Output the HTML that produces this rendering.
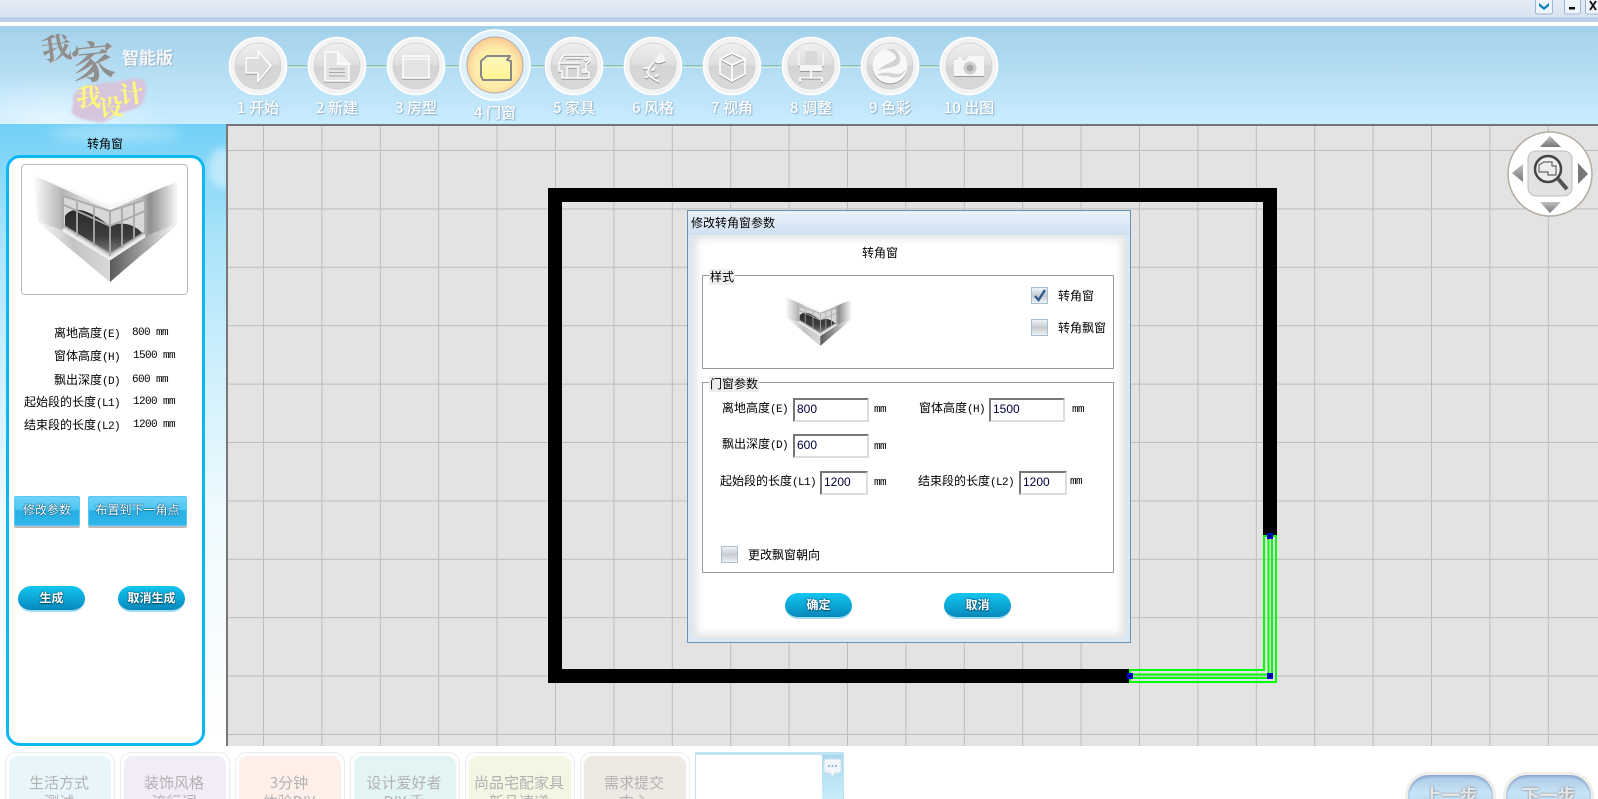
<!DOCTYPE html>
<html lang="zh"><head><meta charset="utf-8"><title>我家我设计</title>
<style>
html,body{margin:0;padding:0;width:1598px;height:799px;overflow:hidden;background:#fff}
body{position:relative;font-family:"WenQuanYi Zen Hei","Noto Sans CJK SC",sans-serif;font-size:12px;color:#000}
div,span,svg{position:absolute}
svg{display:block;overflow:visible}
b.m{position:static;font:normal 11px "Liberation Mono",monospace;letter-spacing:-.6px}
.t{white-space:nowrap;line-height:16px;height:16px}
.v{font:11px/16px "Liberation Mono",monospace;letter-spacing:-.6px;white-space:nowrap;height:16px}
.step{width:80px;text-align:center;color:#fff;font:500 15px/18px "Noto Sans CJK SC",sans-serif;text-shadow:1px 1px 1px #8fb4cd,0 0 2px #a9c6da;white-space:nowrap}
.inp{box-sizing:border-box;background:#fff;border:2px solid;border-color:#777 #ddd #ddd #777;height:24px;font:12px/18px "Liberation Sans",sans-serif;padding-left:2px;color:#00003a}
.cb{width:15px;height:15px;border:1px solid #a9bfd0;background:linear-gradient(#eef3f7,#c5cbd0 50%,#eef2f5)}
.pill{box-sizing:border-box;width:67px;height:26px;border-radius:13px;background:linear-gradient(#13c6f0,#0a9ccd 70%,#0a86b8);border-bottom:2px solid #9fdcf2;color:#fff;text-align:center;font:700 12px/23px "Noto Sans CJK SC",sans-serif;text-shadow:0 0 2px #04506e,0 1px 1px #04506e,0 0 1px #04506e}
.sq{box-sizing:border-box;height:30px;border-radius:2px;background:linear-gradient(#6fd3f8,#4cc6f2 45%,#27b0e6 50%,#2fb5ea);border:1px solid #58c8f2;box-shadow:0 2px 0 #bbb;color:#fff;text-align:center;font:12px/27px "WenQuanYi Zen Hei",sans-serif;text-shadow:0 0 2px #045b80,0 0 1px #045b80,0 0 1px #045b80}
.fs{box-sizing:border-box;border:1px solid #999;left:702px;width:412px}
.lg{background:#eee;height:16px;line-height:16px;padding:0 1px;white-space:nowrap}
.tab{box-sizing:border-box;top:752px;height:60px;border:1px solid #ececec;border-radius:11px;width:110px}
.tab div{left:3px;right:3px;top:3px;bottom:0;border-radius:9px;background:#fff}
.tab p{margin:0;position:absolute;left:3px;right:5px;top:3px;text-align:center;color:#b2b2b2;font:15px/19px "Noto Sans CJK SC",sans-serif;padding-top:17px;white-space:nowrap}
.nav{top:772px;width:91px;height:50px;box-sizing:border-box;border:3px solid #f1ede8;border-radius:24px;background:linear-gradient(#a9c8e4,#c8e4f8 40%,#a5cbe8);box-shadow:inset 0 2px 2px #8aa5cf;color:#e6e6e6;text-align:center;font:700 18px/40px "Noto Sans CJK SC",sans-serif;text-shadow:0 0 2px #777}
</style></head><body>

<!-- top bar -->
<div style="left:0;top:0;width:1598px;height:18px;background:linear-gradient(#e3ebf5,#d8e3f1)"></div>
<div style="left:0;top:17px;width:1598px;height:5px;background:#bdd0e8"></div>
<!-- header -->
<div style="left:0;top:26px;width:1598px;height:98px;background:linear-gradient(#a3d1ea,#c9ecff)"></div>
<div style="left:0;top:76px;width:170px;height:48px;background:radial-gradient(ellipse at 30% 90%,rgba(235,248,255,.8),rgba(235,248,255,0) 70%)"></div>

<!-- top right buttons -->
<svg style="left:1535px;top:0" width="63" height="16">
<rect x=".5" y="-2" width="17" height="16" rx="2" fill="#eef4fb" stroke="#9db5d0"/>
<path d="M4 3l5 4 5-4v3l-5 4-5-4z" fill="#0a7fc4"/>
<rect x="29.5" y="-2" width="16" height="16" rx="2" fill="#eef4fb" stroke="#9db5d0"/>
<rect x="34" y="7" width="6" height="2.5" fill="#111"/>
<rect x="50.5" y="-2" width="16" height="16" rx="2" fill="#eef4fb" stroke="#9db5d0"/>
<path d="M55 1l6 9M61 1l-6 9" stroke="#111" stroke-width="1.8"/>
</svg>

<!-- logo -->
<svg style="left:65px;top:72px" width="90" height="52"><path d="M8 24C14 12 30 12 50 10c12-2 24-7 30 0 3 6 0 14-2 20-3 8-16 8-26 12-6 4-12 10-20 8-6-2-18-2-24-8-4-5 2-8 0-18z" fill="#d6c5dc" style="filter:blur(1px)"/></svg>
<span class="t" style="left:41px;top:30px;height:32px;font:700 30px/32px 'Noto Serif CJK SC',serif;color:#8f8f8f;transform:rotate(-8deg);text-shadow:1px 1px 2px #c5d4de">我</span>
<span class="t" style="left:71px;top:34px;height:50px;font:700 44px/50px 'Noto Serif CJK SC',serif;color:#8e8e8e;transform:rotate(-6deg);text-shadow:1px 1px 2px #c5d4de">家</span>
<span class="t" style="left:122px;top:46px;height:22px;font:700 17px/22px 'Noto Sans CJK SC',sans-serif;color:#f4f7fa;text-shadow:1px 1px 1px #9bb0c4">智能版</span>
<span class="t" style="left:76px;top:82px;height:28px;font:700 25px/28px 'Noto Serif CJK SC',serif;color:#fdf77e">我</span>
<span class="t" style="left:99px;top:92px;height:28px;font:700 24px/28px 'Noto Serif CJK SC',serif;color:#fdf77e;transform:rotate(-8deg)">设</span>
<span class="t" style="left:119px;top:79px;height:28px;font:700 25px/28px 'Noto Serif CJK SC',serif;color:#fdf77e;transform:rotate(-8deg)">计</span>

<!-- step wheel -->
<svg style="left:0;top:0" width="1000" height="110">
<defs>
<linearGradient id="g1" x1="0" y1="0" x2="0" y2="1"><stop offset="0" stop-color="#f0f0f0"/><stop offset=".48" stop-color="#dedede"/><stop offset=".5" stop-color="#d4d4d4"/><stop offset="1" stop-color="#d9d9d9"/></linearGradient>
<radialGradient id="g2" cx=".5" cy=".55" r=".55"><stop offset="0" stop-color="#fff7a0"/><stop offset=".65" stop-color="#fdecaa"/><stop offset="1" stop-color="#fbc894"/></radialGradient>
<linearGradient id="g3" x1="0" y1="0" x2="0" y2="1"><stop offset="0" stop-color="#fbf6c0"/><stop offset="1" stop-color="#fff58c"/></linearGradient>
<g id="disc"><circle r="28.5" fill="#f3f3f3"/><circle r="23" fill="url(#g1)" stroke="#cfcfcf" stroke-width=".7"/></g>
</defs>
<rect x="286" y="65" width="654" height="1.6" fill="#86c4ba"/>
<rect x="286" y="66.600" width="654" height="1" fill="#e8f6f6"/>
<g fill="#e4e4e4" stroke="#fff" stroke-width="1.6" stroke-linejoin="round">
<g transform="translate(258 66)"><use href="#disc"/><path d="M-12-8H0V-15L13 0 0 16V7H-12z" fill="#dcdcdc" style="filter:drop-shadow(0 1px 0 #9a9a9a)"/></g>
<g transform="translate(337 66)"><use href="#disc"/><g style="filter:drop-shadow(0 1px 0 #9a9a9a)"><path d="M-12-14H1L12-2V15H-12z"/><path d="M1-14V-2H12" fill="#f2f2f2"/><path d="M-8 3H8M-8 6.500H8M-8 10H8" stroke="#a8a8a8" stroke-width="1"/></g></g>
<g transform="translate(416 66)"><use href="#disc"/><g style="filter:drop-shadow(0 1px 0 #9a9a9a)"><rect x="-13" y="-10" width="26" height="22"/><path d="M-13-7H13" stroke-width="1"/></g></g>
<g transform="translate(495 65)"><circle r="35" fill="#dff1fb"/><circle r="28" fill="url(#g2)" stroke="#b5aaa2" stroke-width="1"/><path d="M-14-4L-8-9H15L12-5 16-4V15H-12L-14 11z" fill="url(#g3)" stroke="#888" stroke-width="2"/></g>
<g transform="translate(574 66)"><use href="#disc"/><g style="filter:drop-shadow(0 1px 0 #9a9a9a)" fill="none"><path d="M-15-3V5H-12V12H15V6H12V-2L16-5V-11H-10L-15-3zM-15-3H6M-7 1H4V12H-7zM-8-8H8"/><circle cx="12" cy="-7" r="1.500"/><circle cx="10" cy="5" r="1.500"/></g></g>
<g transform="translate(653 66)"><use href="#disc"/><g style="filter:drop-shadow(0 1px 0 #8a8a8a)"><path d="M1-5C3-9 7-12 9-14L13-5C9-3 6-2 3-3z" stroke="none" fill="#f4f4f4"/><path d="M1-4C-3 0-6 4-5 8M-5 8C-1 13 3 14 6 16" fill="none" stroke-width="1.700"/><path d="M-4 1C-7 0-9 1-10 3-7 4-5 3-4 1zM-2 5C-1 2 2 1 3 1 3 4 0 6-2 5zM-3 9C-6 9-8 11-8 12-5 13-4 11-3 9zM1 11C2 8 4 8 6 8 6 11 3 12 1 11z" stroke="none" fill="#f4f4f4"/></g></g>
<g transform="translate(732 66)"><use href="#disc"/><g style="filter:drop-shadow(0 1px 0 #9a9a9a)" fill="none" stroke-width="1.800"><path d="M0-13L13-7V8L0 15-12 8V-7z"/><path d="M-12-7L0-1 13-7M0-1V15"/></g></g>
<g transform="translate(811 66)"><use href="#disc"/><g style="filter:drop-shadow(0 1px 0 #9a9a9a)" stroke="none" fill="#f5f5f5"><rect x="-6" y="-16" width="12" height="15" opacity=".45"/><rect x="-11" y="-1" width="22" height="6"/><rect x="-13" y="-14" width="1.500" height="14"/><rect x="11.500" y="-14" width="1.500" height="14"/><rect x="-1" y="5" width="2" height="8"/><rect x="-12" y="11" width="24" height="1.600"/><rect x="-12" y="12" width="2" height="4"/><rect x="10" y="12" width="2" height="4"/></g></g>
<g transform="translate(890 66)"><use href="#disc"/><g style="filter:drop-shadow(0 1px 0 #9a9a9a)" stroke="none"><circle r="17.500" fill="#f8f8f8"/><path d="M-4-17C4-13 10-9 3-5-2-2-9 0-12 5-6 2 2 2 7-1 13-5 10-12 4-17zM-13 9C-7 5 0 7 6 8 10 9 13 6 16 3 14 10 7 13 1 11-4 9-8 10-13 9z" fill="#d2d2d2"/></g></g>
<g transform="translate(969 66)"><use href="#disc"/><g style="filter:drop-shadow(0 1px 0 #9a9a9a)" stroke="none"><path d="M-15-6H-11V-9H-7V-6H-3L0-10H15V10H-15z" fill="#f6f6f6"/><circle cx="1" cy="2" r="7" fill="#cfcfcf" stroke="#f6f6f6" stroke-width="1"/><circle cx="1" cy="2" r="3.500" fill="#a8a8a8"/></g></g>
</g>
</svg>
<div class="step" style="left:218px;top:99px">1 开始</div>
<div class="step" style="left:297px;top:99px">2 新建</div>
<div class="step" style="left:376px;top:99px">3 房型</div>
<div class="step" style="left:455px;top:104px">4 门窗</div>
<div class="step" style="left:534px;top:99px">5 家具</div>
<div class="step" style="left:613px;top:99px">6 风格</div>
<div class="step" style="left:692px;top:99px">7 视角</div>
<div class="step" style="left:771px;top:99px">8 调整</div>
<div class="step" style="left:850px;top:99px">9 色彩</div>
<div class="step" style="left:929px;top:99px">10 出图</div>

<!-- sidebar sky -->
<div style="left:0;top:124px;width:226px;height:622px;overflow:hidden;background:linear-gradient(#72d0f7,#a9e3fa 18%,#cdeffc 38%,#eefafe 62%,#fff 100%)">
<div style="left:50px;top:0;width:130px;height:18px;border-radius:50%;background:rgba(255,255,255,.3);filter:blur(6px)"></div>
<div style="left:208px;top:24px;width:30px;height:40px;border-radius:50%;background:rgba(255,255,255,.45);filter:blur(4px)"></div>
</div>
<div class="t" style="left:7px;top:136px;width:196px;text-align:center">转角窗</div>
<div style="box-sizing:border-box;left:6px;top:155px;width:199px;height:591px;background:#fff;border:3px solid #0bb8f3;border-radius:14px"></div>
<div style="box-sizing:border-box;left:21px;top:164px;width:167px;height:131px;border:1px solid #bbb;border-radius:4px;background:#fff"></div>

<svg width="0" height="0" style="left:0;top:0">
<defs>
<linearGradient id="wl" gradientUnits="userSpaceOnUse" x1="12" y1="0" x2="89" y2="0"><stop offset="0" stop-color="#fff"/><stop offset=".38" stop-color="#b4b4b4"/><stop offset=".6" stop-color="#cfcfcf"/><stop offset="1" stop-color="#e2e2e2"/></linearGradient>
<linearGradient id="wr" gradientUnits="userSpaceOnUse" x1="158" y1="0" x2="89" y2="0"><stop offset="0" stop-color="#fff"/><stop offset=".42" stop-color="#8e8e8e"/><stop offset=".55" stop-color="#bcbcbc"/><stop offset="1" stop-color="#dedede"/></linearGradient>
<linearGradient id="wb" gradientUnits="userSpaceOnUse" x1="89" y1="0" x2="150" y2="0"><stop offset="0" stop-color="#5a5a5a"/><stop offset=".6" stop-color="#a8a8a8"/><stop offset="1" stop-color="#eee"/></linearGradient>
<linearGradient id="wd" x1="0" y1="0" x2="0" y2="1"><stop offset="0" stop-color="#2a2a2a"/><stop offset=".6" stop-color="#3d3d3d"/><stop offset="1" stop-color="#7d7d7d"/></linearGradient>
<linearGradient id="wf" gradientUnits="userSpaceOnUse" x1="15" y1="0" x2="89" y2="0"><stop offset="0" stop-color="#fff"/><stop offset=".5" stop-color="#c4c4c4"/><stop offset="1" stop-color="#d8d8d8"/></linearGradient>
<symbol id="corner" viewBox="0 0 167 131">
<path d="M12 11L89 41 156 18 156 60 89 118 17 58z" fill="#fff"/>
<path d="M12 11L89 42V118L17 58z" fill="url(#wl)"/>
<path d="M89 42L157 18V60L89 118z" fill="url(#wr)"/>
<path d="M12 11L89 41 157 17 89 46z" fill="#f6f6f6"/>
<path d="M42 32L89 47 124 36V72L89 95 42 66z" fill="#d8d8d8"/>
<path d="M44 52C48 46 56 44 66 48 76 52 84 58 89 62 98 58 112 58 122 70L89 90 44 62z" fill="url(#wd)"/>
<path d="M42 32L89 47 124 36M43 41L89 62 124 47M43 62L89 90 124 68M42 32V64M56 38V72M73 42V82M89 47V92M101 44V84M113 40V76M124 36V70" fill="none" stroke="#a9a9a9" stroke-width="1.800"/>
<path d="M42 66L89 96V118L17 58z" fill="url(#wf)"/>
<path d="M89 96L124 72 156 60 89 118z" fill="url(#wb)"/>
<path d="M42 66L89 95 124 72" fill="none" stroke="#efefef" stroke-width="2.500"/>
</symbol>
</defs>
</svg>
<svg style="left:21px;top:164px" width="167" height="131"><use href="#corner"/></svg>

<div class="t" style="right:1478px;top:325px">离地高度<b class="m">(E)</b></div><div class="v" style="left:132px;top:325px">800 mm</div>
<div class="t" style="right:1478px;top:348px">窗体高度<b class="m">(H)</b></div><div class="v" style="left:133px;top:348px">1500 mm</div>
<div class="t" style="right:1478px;top:372px">飘出深度<b class="m">(D)</b></div><div class="v" style="left:132px;top:372px">600 mm</div>
<div class="t" style="right:1478px;top:394px">起始段的长度<b class="m">(L1)</b></div><div class="v" style="left:133px;top:394px">1200 mm</div>
<div class="t" style="right:1478px;top:417px">结束段的长度<b class="m">(L2)</b></div><div class="v" style="left:133px;top:417px">1200 mm</div>

<div class="sq" style="left:14px;top:496px;width:66px">修改参数</div>
<div class="sq" style="left:88px;top:496px;width:99px">布置到下一角点</div>
<div class="pill" style="left:18px;top:586px">生成</div>
<div class="pill" style="left:118px;top:586px">取消生成</div>

<!-- canvas -->
<div style="left:226px;top:124px;width:1372px;height:622px;background:#e3e3e3;overflow:hidden">
<svg style="left:0;top:0" width="1372" height="622">
<defs><pattern id="grid" x="37" y="26" width="58.4" height="58.4" patternUnits="userSpaceOnUse"><path d="M0 0V58.4M0 0H58.4" stroke="#bdbdbd" stroke-width="2" fill="none"/></pattern></defs>
<rect width="1372" height="622" fill="url(#grid)"/>
</svg>
</div>
<div style="left:226px;top:124px;width:2px;height:622px;background:#777"></div>
<div style="left:226px;top:124px;width:1372px;height:2px;background:#777"></div>

<!-- walls and green window -->
<svg style="left:0;top:0" width="1598" height="799">
<path d="M548 188H1277V536H1263V202H562V669H1130V683H548z" fill="#000"/>
<g fill="none" stroke="#00ff00" stroke-width="2">
<path d="M1130 670H1264V536H1276V682H1130z"/>
<path d="M1130 674.500H1268.500V536"/>
<path d="M1130 678H1272V536"/>
</g>
<g fill="#0000e8"><rect x="1127" y="673" width="6" height="6"/><rect x="1267" y="673" width="6" height="6"/><rect x="1267" y="533" width="6" height="6"/></g>
<g fill="#000"><rect x="1129" y="675" width="2" height="2"/><rect x="1269" y="675" width="2" height="2"/><rect x="1269" y="535" width="2" height="2"/></g>
</svg>

<!-- navigator -->
<svg style="left:1500px;top:125px" width="98" height="100">
<defs><linearGradient id="ar" x1="0" y1="0" x2="0" y2="1"><stop offset="0" stop-color="#c0c0c0"/><stop offset="1" stop-color="#777"/></linearGradient></defs>
<circle cx="50" cy="49" r="42" fill="#fff" stroke="#b5aca2" stroke-width="1.500"/>
<rect x="28" y="26" width="44" height="45" rx="8" fill="#e2e2e2" stroke="#c2bdb8"/>
<path d="M50 11L61 22H40z" fill="url(#ar)"/><path d="M40 77H61L50 88z" fill="url(#ar)"/>
<path d="M23 40V58L12 49z" fill="url(#ar)" transform="translate(0 -1)"/><path d="M78 38V59L88 49z" fill="#777"/>
<circle cx="48" cy="44" r="13" fill="#eee" stroke="#444" stroke-width="2.500"/>
<path d="M58 54L64 66" stroke="#555" stroke-width="4" transform="rotate(-14 58 53)"/>
<path d="M39 40L44 37H52V41H56V50H48V47H39z" fill="none" stroke="#666" stroke-width="1.200"/>
</svg>

<!-- dialog -->
<div style="box-sizing:border-box;left:687px;top:210px;width:444px;height:433px;background:#dbe7f3;border:1px solid #6c91b6">
<div style="left:0;top:0;width:442px;height:24px;background:linear-gradient(#eaf2fa,#cfe0f1)"></div>
<div style="left:5px;top:24px;width:432px;height:403px;background:#fff;box-shadow:inset 0 0 8px 4px #e4e4e4;border-radius:6px"></div>
</div>
<div class="t" style="left:691px;top:215px">修改转角窗参数</div>
<div class="t" style="left:862px;top:245px">转角窗</div>

<div class="fs" style="top:275px;height:94px"></div>
<div class="lg" style="left:709px;top:269px">样式</div>
<svg style="left:785px;top:295px" width="67" height="53" viewBox="12 8 146 114"><use href="#corner" width="167" height="131"/></svg>
<div class="cb" style="left:1031px;top:287px"></div>
<svg style="left:1031px;top:287px" width="17" height="17"><path d="M4 9L7.500 13 14 3" fill="none" stroke="#2e5a8c" stroke-width="2.400"/></svg>
<div class="t" style="left:1058px;top:288px">转角窗</div>
<div class="cb" style="left:1031px;top:319px"></div>
<div class="t" style="left:1058px;top:320px">转角飘窗</div>

<div class="fs" style="top:382px;height:191px"></div>
<div class="lg" style="left:709px;top:376px">门窗参数</div>

<div class="t" style="left:722px;top:400px">离地高度<b class="m">(E)</b></div>
<div class="inp" style="left:793px;top:398px;width:76px">800</div>
<div class="v" style="left:874px;top:402px">mm</div>
<div class="t" style="left:919px;top:400px">窗体高度<b class="m">(H)</b></div>
<div class="inp" style="left:989px;top:398px;width:76px">1500</div>
<div class="v" style="left:1072px;top:402px">mm</div>

<div class="t" style="left:722px;top:436px">飘出深度<b class="m">(D)</b></div>
<div class="inp" style="left:793px;top:434px;width:76px">600</div>
<div class="v" style="left:874px;top:439px">mm</div>

<div class="t" style="left:720px;top:473px">起始段的长度<b class="m">(L1)</b></div>
<div class="inp" style="left:820px;top:471px;width:48px">1200</div>
<div class="v" style="left:874px;top:475px">mm</div>
<div class="t" style="left:918px;top:473px">结束段的长度<b class="m">(L2)</b></div>
<div class="inp" style="left:1019px;top:471px;width:48px">1200</div>
<div class="v" style="left:1070px;top:474px">mm</div>

<div class="cb" style="left:721px;top:546px"></div>
<div class="t" style="left:748px;top:547px">更改飘窗朝向</div>

<div class="pill" style="left:785px;top:593px">确定</div>
<div class="pill" style="left:944px;top:593px">取消</div>

<!-- bottom tabs -->
<div class="tab" style="left:5px"><div style="background:#e8f6fc"></div><p>生活方式<br>测试</p></div>
<div class="tab" style="left:120px"><div style="background:#f2ebf8"></div><p>装饰风格<br>流行词</p></div>
<div class="tab" style="left:235px"><div style="background:#fef0e8"></div><p>3分钟<br>体验DIY</p></div>
<div class="tab" style="left:350px"><div style="background:#e3f4f4"></div><p>设计爱好者<br>DIY 手</p></div>
<div class="tab" style="left:465px"><div style="background:#f5f5e3"></div><p>尚品宅配家具<br>新品速递</p></div>
<div class="tab" style="left:580px"><div style="background:#eee9e3"></div><p>需求提交<br>中心</p></div>
<div style="box-sizing:border-box;left:695px;top:752px;width:149px;height:60px;border:1px solid #bfe3f1;border-top-width:3px;background:#fff"></div>
<div style="left:822px;top:755px;width:21px;height:44px;background:linear-gradient(#a9d9ee,#c9eefa)"></div>
<svg style="left:823px;top:758px" width="19" height="20"><path d="M1 4Q1 1 4 1H15Q18 1 18 4V12Q18 15 15 15H12L9.500 19 7 15H4Q1 15 1 12z" fill="#f2f6fa" stroke="#cfe2ec"/><circle cx="6" cy="8" r="1.100" fill="#8fb6d8"/><circle cx="9.500" cy="8" r="1.100" fill="#8fb6d8"/><circle cx="13" cy="8" r="1.100" fill="#8fb6d8"/></svg>

<div class="nav" style="left:1405px">上一步</div>
<div class="nav" style="left:1503px">下一步</div>
</body></html>
